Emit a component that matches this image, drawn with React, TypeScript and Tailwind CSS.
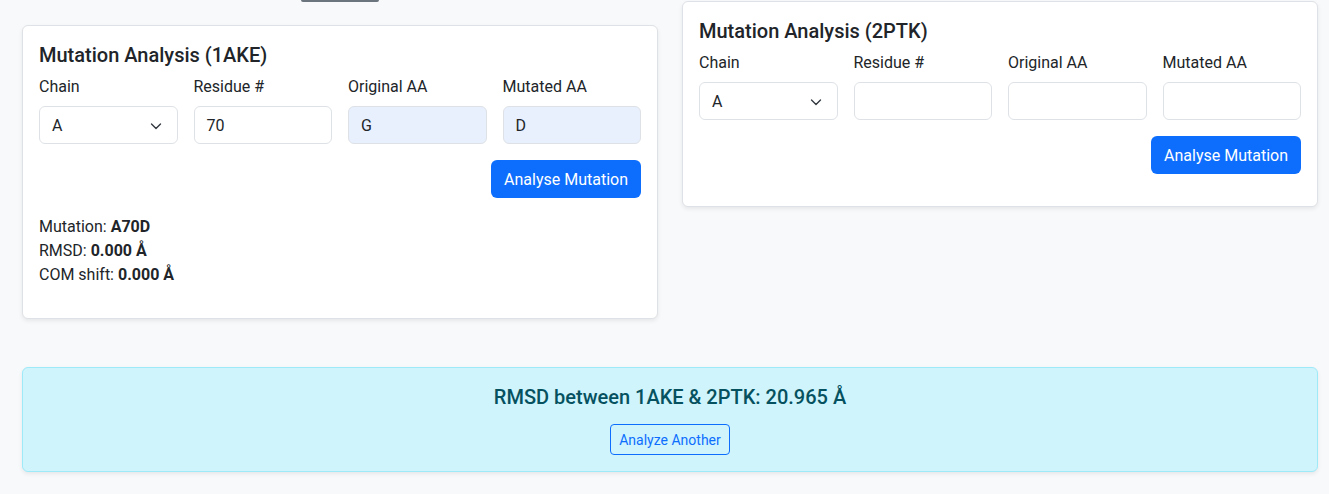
import React from "react";

const font = { fontFamily: "Roboto, 'Noto Sans', sans-serif" };

function Field({ label, children }: { label: string; children: React.ReactNode }) {
  return (
    <div className="flex flex-col">
      <label className="mb-2 pt-px text-base leading-6 text-[#212529] h-6">{label}</label>
      {children}
    </div>
  );
}

function Chevron() {
  return (
    <svg width="12" height="12" viewBox="0 0 12 12" className="text-[#343a40]">
      <path d="M1.5 4 6 8.5 10.5 4" fill="none" stroke="currentColor" strokeWidth="1.4" strokeLinecap="round" strokeLinejoin="round" />
    </svg>
  );
}

function Input({ value, filled }: { value?: string; filled?: boolean }) {
  return (
    <div
      className={`flex h-[38px] items-center rounded-md border border-[#dee2e6] px-3 pt-px text-base text-[#212529] ${
        filled ? "bg-[#e8f0fe]" : "bg-white"
      }`}
    >
      {value}
    </div>
  );
}

function Card({
  title,
  residue,
  orig,
  mut,
  results,
}: {
  title: string;
  residue?: string;
  orig?: string;
  mut?: string;
  results?: boolean;
}) {
  return (
    <div className="rounded-md border border-[#dee2e6] bg-white p-4 shadow-[0_2px_4px_rgba(0,0,0,0.075)]">
      <h5 className="mb-2 h-6 pt-px text-[20px] font-medium leading-[1.2] text-[#212529]">{title}</h5>
      <div className="grid grid-cols-4 gap-4">
        <Field label="Chain">
          <div className="flex h-[38px] items-center justify-between rounded-md border border-[#dee2e6] bg-white pl-3 pr-[15px] pt-px text-base text-[#212529]">
            <span>A</span>
            <Chevron />
          </div>
        </Field>
        <Field label="Residue #">
          <Input value={residue} />
        </Field>
        <Field label="Original AA">
          <Input value={orig} filled={!!orig} />
        </Field>
        <Field label="Mutated AA">
          <Input value={mut} filled={!!mut} />
        </Field>
      </div>
      <div className="mt-4 mb-4 flex justify-end">
        <button className="h-[38px] rounded-md bg-[#0d6efd] px-[13px] pt-px text-base text-white">Analyse Mutation</button>
      </div>
      {results && (
        <div className="mb-[15px] pt-px text-base leading-6 text-[#212529]">
          <div>
            Mutation: <b className="font-bold">A70D</b>
          </div>
          <div>
            RMSD: <b className="font-bold">0.000 Å</b>
          </div>
          <div>
            COM shift: <b className="font-bold">0.000 Å</b>
          </div>
        </div>
      )}
    </div>
  );
}

export default function App() {
  return (
    <div className="min-h-[494px] bg-[#f8f9fa] pl-[22px] pr-[11px]" style={font}>
      <div className="grid grid-cols-2 items-start gap-6">
        <div className="flex flex-col">
          <div className="mx-auto h-[2px] w-[78px] rounded-b bg-[#6c757d]" />
          <div className="mt-[23px]">
            <Card title="Mutation Analysis (1AKE)" residue="70" orig="G" mut="D" results />
          </div>
        </div>
        <div className="mt-px">
          <Card title="Mutation Analysis (2PTK)" />
        </div>
      </div>
      <div className="mt-12 rounded-md border border-[#9eeaf9] bg-[#cff4fc] p-4 text-center shadow-[0_2px_4px_rgba(0,0,0,0.075)]">
        <h5 className="mb-4 h-6 pt-px text-[20px] font-medium leading-[1.2] text-[#055160]">RMSD between 1AKE &amp; 2PTK: 20.965 Å</h5>
        <button className="h-[31px] rounded border border-[#0d6efd] px-2 pt-px text-sm text-[#0d6efd]">Analyze Another</button>
      </div>
    </div>
  );
}
